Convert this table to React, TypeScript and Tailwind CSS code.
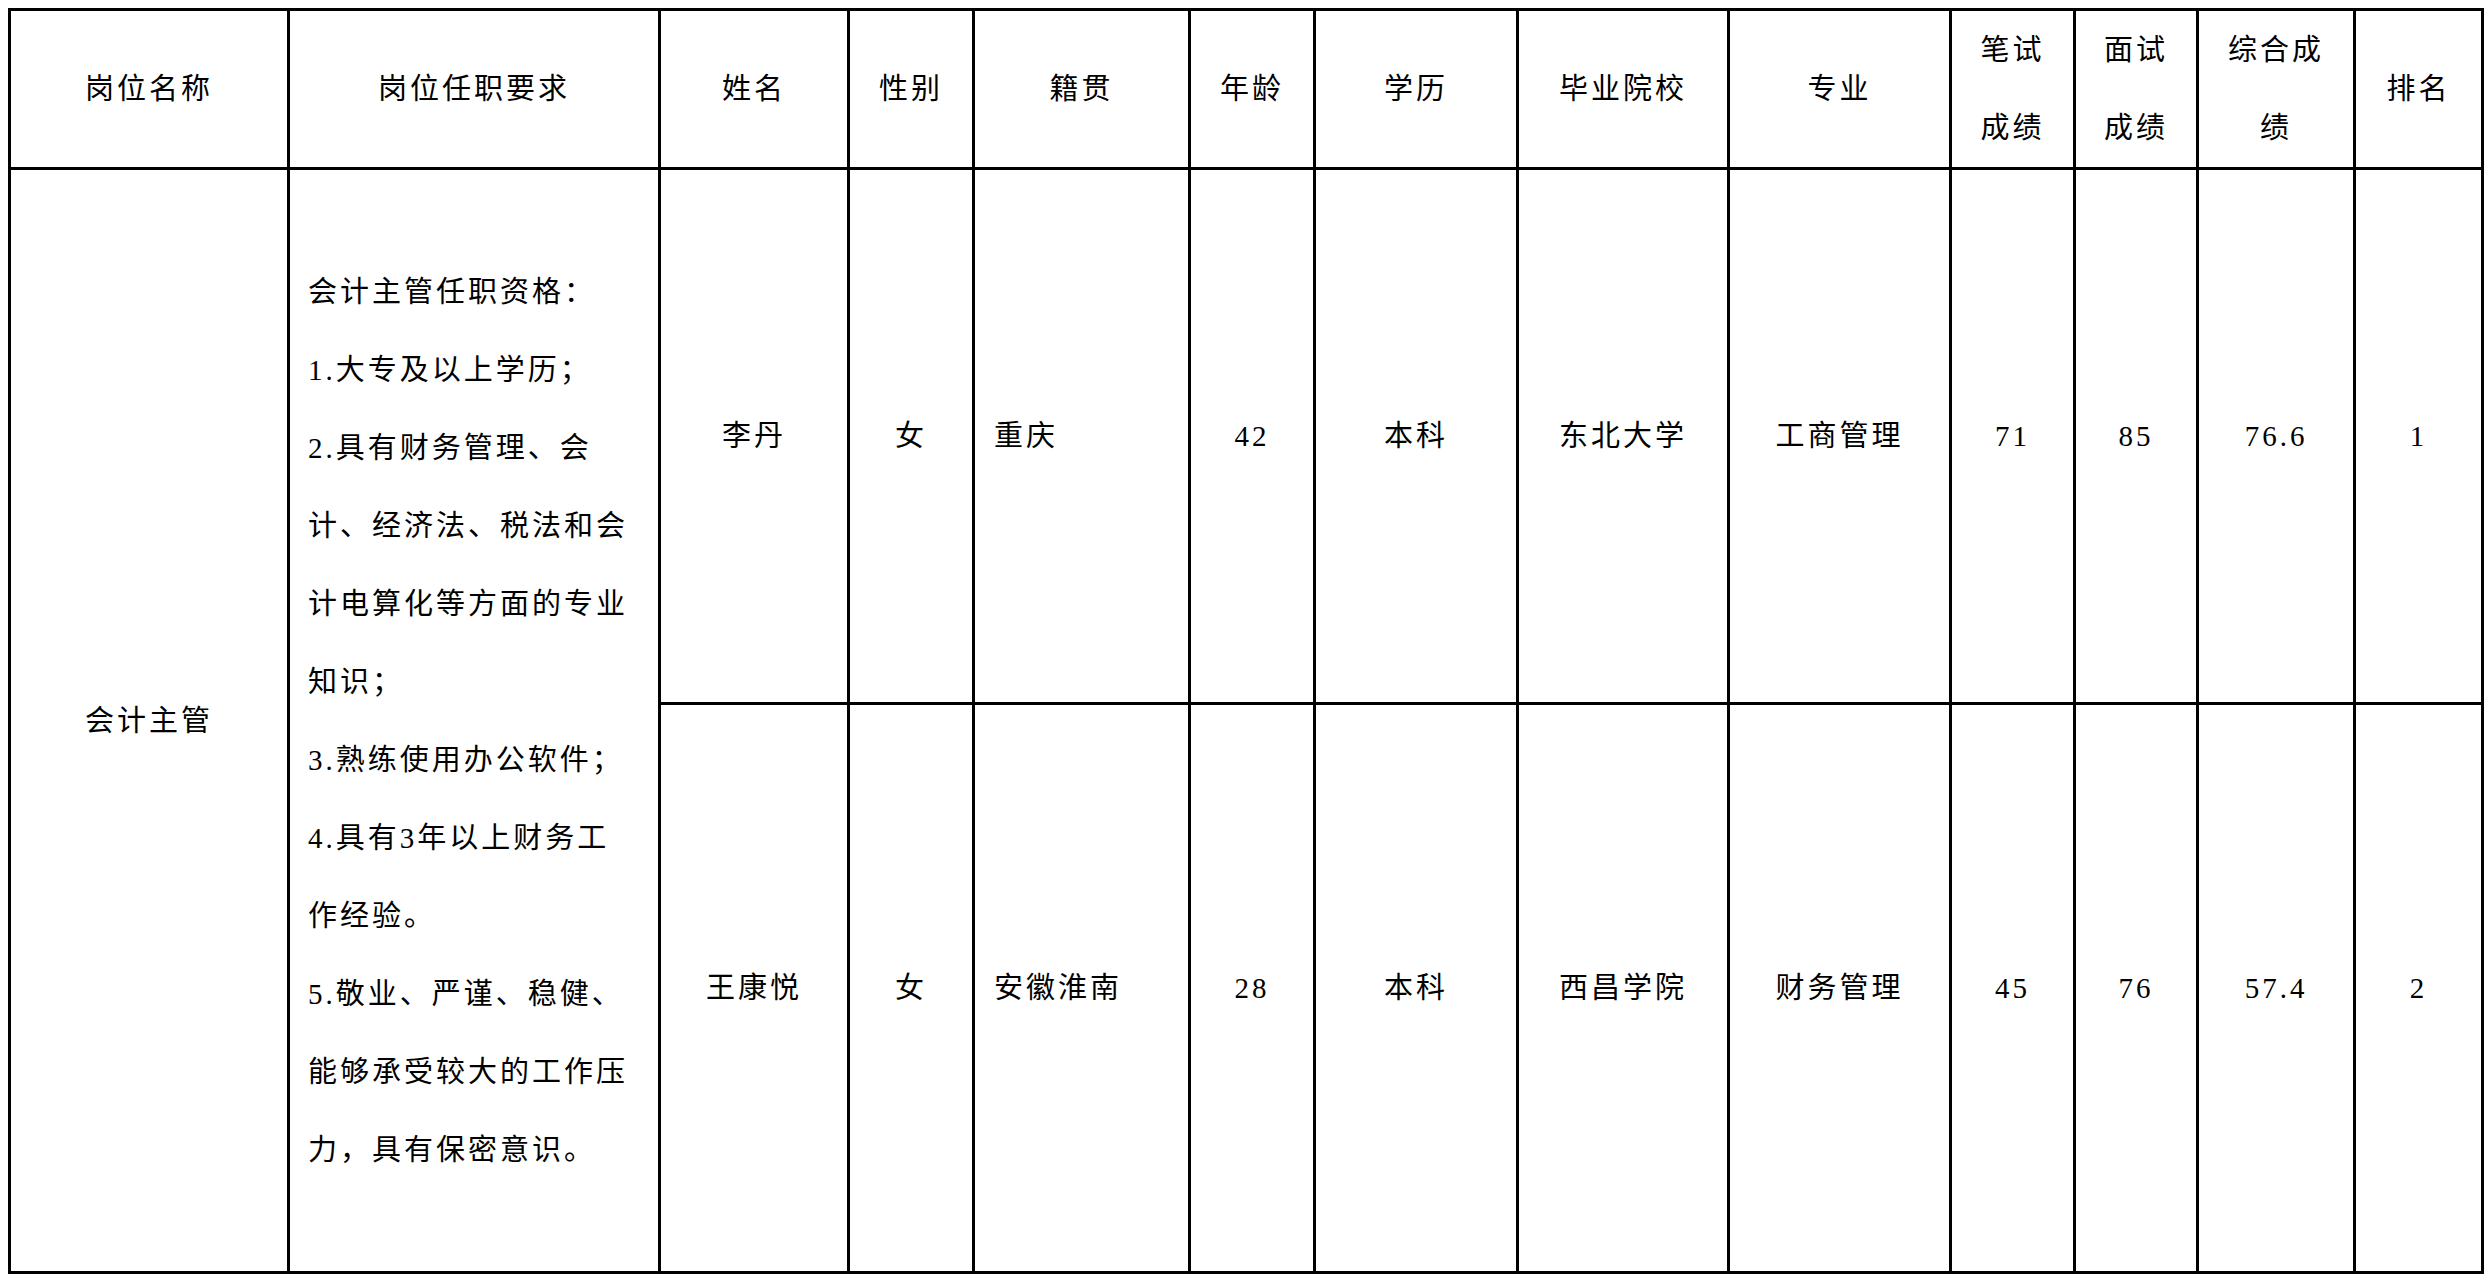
import type { ReactNode } from "react";

const headers: ReactNode[] = [
  "岗位名称",
  "岗位任职要求",
  "姓名",
  "性别",
  "籍贯",
  "年龄",
  "学历",
  "毕业院校",
  "专业",
  <>笔试<br />成绩</>,
  <>面试<br />成绩</>,
  <>综合成<br />绩</>,
  "排名",
];

const requirements = [
  "会计主管任职资格：",
  "1.大专及以上学历；",
  "2.具有财务管理、会",
  "计、经济法、税法和会",
  "计电算化等方面的专业",
  "知识；",
  "3.熟练使用办公软件；",
  "4.具有3年以上财务工",
  "作经验。",
  "5.敬业、严谨、稳健、",
  "能够承受较大的工作压",
  "力，具有保密意识。",
];

const candidates = [
  { name: "李丹", sex: "女", origin: "重庆", age: "42", edu: "本科", school: "东北大学", major: "工商管理", written: "71", interview: "85", total: "76.6", rank: "1" },
  { name: "王康悦", sex: "女", origin: "安徽淮南", age: "28", edu: "本科", school: "西昌学院", major: "财务管理", written: "45", interview: "76", total: "57.4", rank: "2" },
];

function Cell({ children, className = "" }: { children?: ReactNode; className?: string }) {
  return <div className={`bg-white flex items-center justify-center text-center ${className}`}>{children}</div>;
}

export default function App() {
  return (
    <div className="min-h-screen bg-white pt-[8px] pl-[8px] font-['Liberation_Serif','Noto_Sans_CJK_SC',serif] text-[29px] leading-[78px] tracking-[3px] text-black">
      <div className="inline-grid grid-cols-[276px_368px_186px_122px_213px_122px_200px_208px_219px_121px_120px_154px_125px] grid-rows-[156px_532px_566px] gap-[3px] p-[3px] bg-black">
        {headers.map((h, i) => (
          <Cell key={i}>
            <div>{h}</div>
          </Cell>
        ))}

        <Cell className="row-span-2">会计主管</Cell>
        <Cell className="row-span-2 !justify-start !text-left pl-[18px]">
          <div>
            {requirements.map((line) => (
              <div key={line} className="whitespace-nowrap">{line}</div>
            ))}
          </div>
        </Cell>

        {candidates.map((c) => (
          <div key={c.name} className="contents">
            <Cell>{c.name}</Cell>
            <Cell>{c.sex}</Cell>
            <Cell className="!justify-start pl-[19px]">{c.origin}</Cell>
            <Cell>{c.age}</Cell>
            <Cell>{c.edu}</Cell>
            <Cell>{c.school}</Cell>
            <Cell>{c.major}</Cell>
            <Cell>{c.written}</Cell>
            <Cell>{c.interview}</Cell>
            <Cell>{c.total}</Cell>
            <Cell>{c.rank}</Cell>
          </div>
        ))}
      </div>
    </div>
  );
}
